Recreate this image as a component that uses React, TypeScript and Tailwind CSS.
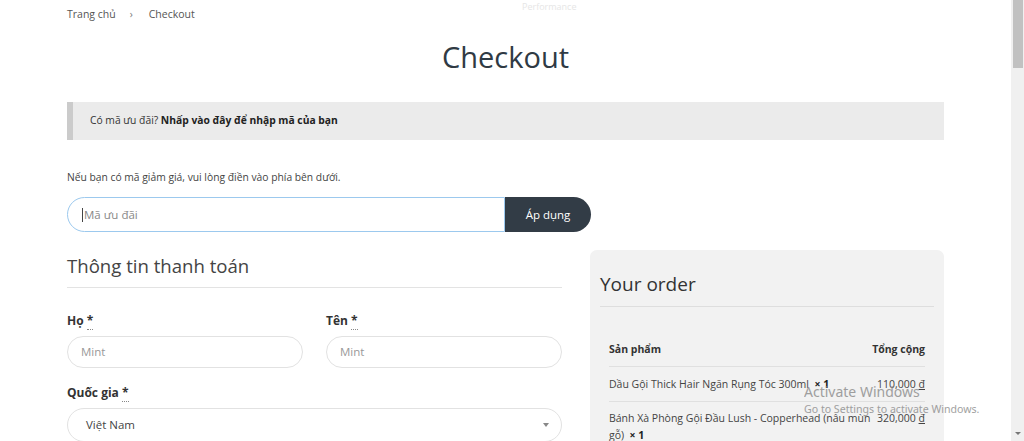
const font = { fontFamily: '"Open Sans", "Noto Sans", sans-serif' };

function Field({ label, value }: { label: string; value: string }) {
  return (
    <div className="flex flex-col">
      <label className="text-[12px] font-bold text-[#333] leading-[18px]">
        {label}{" "}
        <abbr className="no-underline border-b border-dotted border-[#888] text-[#333]">*</abbr>
      </label>
      <div className="mt-[6px] h-[32px] rounded-full border border-[#e2e2e2] flex items-center pl-[13px] text-[11.5px] text-[#999]">
        {value}
      </div>
    </div>
  );
}

export default function App() {
  return (
    <div style={font} className="w-[1024px] h-[441px] overflow-hidden flex bg-white relative">
      <main className="flex-1 relative">
        <div className="absolute top-[0px] left-[522px] text-[9px] text-[#e6e6e6]">Performance</div>
        <div className="w-[877px] mx-auto">
          {/* breadcrumb */}
          <nav className="pt-[5px] flex items-center text-[10.5px] text-[#555] leading-[18px]">
            <span>Trang chủ</span>
            <span className="ml-[14px] mr-[16px] text-[10px] text-[#777]">›</span>
            <span>Checkout</span>
          </nav>

          <h1 className="mt-[16px] text-center text-[29px] leading-[36px] text-[#2f3a44]">Checkout</h1>

          {/* coupon notice */}
          <div className="mt-[27px] h-[38px] bg-[#ebebeb] border-l-[6px] border-[#cbcbcb] flex items-center pl-[17px] text-[10.3px] text-[#333]">
            Có mã ưu đãi?&nbsp;<b className="font-bold text-[#222]">Nhấp vào đây để nhập mã của bạn</b>
          </div>

          <p className="mt-[29px] text-[10.3px] text-[#444] leading-[16px]">
            Nếu bạn có mã giảm giá, vui lòng điền vào phía bên dưới.
          </p>

          <div className="mt-[12px] flex w-[524px] h-[35px]">
            <div className="flex-1 rounded-l-full border border-[#9cc9ee] flex items-center pl-[14px] text-[11.5px] text-[#888]">
              <span className="w-px h-[14px] bg-[#444] mr-[1px]" />
              Mã ưu đãi
            </div>
            <button className="w-[86px] rounded-r-full bg-[#323c46] text-white text-[11.5px]">Áp dụng</button>
          </div>

          <div className="mt-[18px] flex gap-[28px]">
            {/* billing */}
            <div className="w-[495px]">
              <h3 className="pt-[3px] text-[18.6px] leading-[26px] text-[#444]">Thông tin thanh toán</h3>
              <div className="mt-[8px] border-t border-[#e3e3e3]" />
              <div className="mt-[24px] grid grid-cols-2 gap-x-[23px]">
                <Field label="Họ" value="Mint" />
                <Field label="Tên" value="Mint" />
              </div>
              <div className="mt-[16px] flex flex-col">
                <label className="text-[12px] font-bold text-[#333] leading-[18px]">
                  Quốc gia{" "}
                  <abbr className="no-underline border-b border-dotted border-[#888]">*</abbr>
                </label>
                <div className="mt-[6px] h-[34px] rounded-full border border-[#e2e2e2] flex items-center justify-between pl-[18px] pr-[12px] text-[11.5px] text-[#444]">
                  <span>Việt Nam</span>
                  <span className="w-0 h-0 border-l-[3px] border-r-[3px] border-t-[4px] border-l-transparent border-r-transparent border-t-[#888]" />
                </div>
              </div>
            </div>

            {/* order */}
            <div className="w-[354px] bg-[#f2f2f2] rounded-[7px] px-[10px] pt-[21px] h-[260px]">
              <h3 className="text-[19px] leading-[26px] text-[#333]">Your order</h3>
              <div className="mt-[9px] border-t border-[#dedede]" />
              <div className="px-[9px] mt-[35px] text-[10.5px] text-[#444]">
                <div className="flex justify-between font-bold text-[#333] pb-[8px] border-b border-[#e0e0e0]">
                  <span>Sản phẩm</span>
                  <span>Tổng cộng</span>
                </div>
                <div className="flex justify-between py-[7px] border-b border-[#e0e0e0] leading-[20px]">
                  <span>
                    Dầu Gội Thick Hair Ngăn Rụng Tóc 300ml&nbsp; <b className="text-[#222]">× 1</b>
                  </span>
                  <span>110,000 <u>đ</u></span>
                </div>
                <div className="flex justify-between gap-[4px] py-[8px] leading-[17px]">
                  <span className="w-[264px]">
                    Bánh Xà Phòng Gội Đầu Lush - Copperhead (nâu mùn gỗ)&nbsp; <b className="text-[#222]">× 1</b>
                  </span>
                  <span className="whitespace-nowrap">320,000 <u>đ</u></span>
                </div>
              </div>
            </div>
          </div>
        </div>

        {/* Windows watermark */}
        <div className="absolute left-[804px] top-[383px] text-[#8a8a8a] pointer-events-none" style={{ fontFamily: '"Noto Sans", sans-serif' }}>
          <div className="text-[14px] leading-[18px] opacity-80">Activate Windows</div>
          <div className="text-[10.6px] leading-[14px] mt-[1px] opacity-80">Go to Settings to activate Windows.</div>
        </div>
      </main>

      {/* scrollbar */}
      <div className="w-[13px] bg-[#f0f0f0] flex flex-col items-center">
        <div className="w-[10px] h-[68px] bg-[#c1c1c1]" />
        <div className="flex-1" />
        <span className="mb-[6px] w-0 h-0 border-l-[3px] border-r-[3px] border-t-[3px] border-l-transparent border-r-transparent border-t-[#777]" />
      </div>
    </div>
  );
}
